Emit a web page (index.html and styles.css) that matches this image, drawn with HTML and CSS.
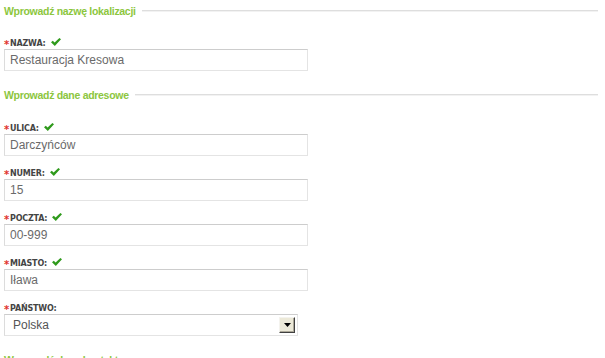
FILE: index.html
```html
<!DOCTYPE html>
<html lang="pl">
<head>
<meta charset="utf-8">
<link rel="stylesheet" href="styles.css">
</head>
<body>
<form class="form">
  <section class="group">
    <div class="legend"><span class="legend-text">Wprowadź nazwę lokalizacji</span><span class="legend-line"></span></div>
    <div class="field">
      <div class="label"><span class="req">*</span>NAZWA:<svg class="check" viewBox="0 0 10 8" width="10" height="8"><path d="M0 4.2 L1.8 2.8 L3.6 4.6 L8.4 0 L10 1.2 L3.8 8 Z" fill="#2f9a1c"/></svg></div>
      <div class="input">Restauracja Kresowa</div>
    </div>
  </section>
  <section class="group group-address">
    <div class="legend"><span class="legend-text">Wprowadź dane adresowe</span><span class="legend-line"></span></div>
    <div class="field">
      <div class="label"><span class="req">*</span>ULICA:<svg class="check" viewBox="0 0 10 8" width="10" height="8"><path d="M0 4.2 L1.8 2.8 L3.6 4.6 L8.4 0 L10 1.2 L3.8 8 Z" fill="#2f9a1c"/></svg></div>
      <div class="input">Darczyńców</div>
    </div>
    <div class="field">
      <div class="label"><span class="req">*</span>NUMER:<svg class="check" viewBox="0 0 10 8" width="10" height="8"><path d="M0 4.2 L1.8 2.8 L3.6 4.6 L8.4 0 L10 1.2 L3.8 8 Z" fill="#2f9a1c"/></svg></div>
      <div class="input">15</div>
    </div>
    <div class="field">
      <div class="label"><span class="req">*</span>POCZTA:<svg class="check" viewBox="0 0 10 8" width="10" height="8"><path d="M0 4.2 L1.8 2.8 L3.6 4.6 L8.4 0 L10 1.2 L3.8 8 Z" fill="#2f9a1c"/></svg></div>
      <div class="input">00-999</div>
    </div>
    <div class="field">
      <div class="label"><span class="req">*</span>MIASTO:<svg class="check" viewBox="0 0 10 8" width="10" height="8"><path d="M0 4.2 L1.8 2.8 L3.6 4.6 L8.4 0 L10 1.2 L3.8 8 Z" fill="#2f9a1c"/></svg></div>
      <div class="input">Iława</div>
    </div>
    <div class="field">
      <div class="label"><span class="req">*</span>PAŃSTWO:</div>
      <div class="select"><span class="select-text">Polska</span><span class="select-btn"><svg viewBox="0 0 7 4" width="7" height="4"><path d="M0 0 H7 L3.5 4 Z" fill="#000"/></svg></span></div>
    </div>
  </section>
  <section class="group">
    <div class="legend"><span class="legend-text">Wprowadź dane kontaktowe</span><span class="legend-line"></span></div>
  </section>
</form>
</body>
</html>
```
FILE: styles.css
```css
html, body { margin: 0; padding: 0; background: #fff; }
body { font-family: "Liberation Sans", Arial, sans-serif; overflow: hidden; height: 358px; }
.form { padding: 4px 7px 0 4px; display: flex; flex-direction: column; gap: 17px; }
.group { display: flex; flex-direction: column; gap: 11px; }
.legend { display: flex; align-items: center; gap: 6px; height: 14px; margin-bottom: 8px; }
.group-address .legend { margin-bottom: 9px; }
.legend-text { font-size: 10.5px; font-weight: bold; letter-spacing: -0.3px; color: #8cc63e; white-space: nowrap; }
.legend-line { flex: 1; height: 0; border-top: 1px solid #dedede; border-bottom: 1px solid #f2f2f2; }
.field { display: flex; flex-direction: column; }
.label { display: flex; align-items: center; height: 12px; font-family: "DejaVu Sans", Verdana, sans-serif; font-size: 8px; font-weight: bold; letter-spacing: -0.2px; color: #444; }
.req { color: #e0322d; font-size: 10px; margin-right: 1px; position: relative; top: 1px; }
.check { margin-left: 5px; margin-top: -3px; }
.input { width: 292px; height: 20px; line-height: 20px; padding: 0 5px; border: 1px solid #e4e4e4; border-top-color: #cdcdcd; border-left-color: #dcdcdc; font-size: 12px; color: #6a6a6a; }
.select { width: 282px; height: 20px; padding: 0 2px 0 8px; border: 1px solid #e4e4e4; border-top-color: #cdcdcd; border-left-color: #dcdcdc; display: flex; align-items: center; justify-content: space-between; font-size: 12px; color: #555; }
.select-btn { width: 14px; height: 14px; background: #ece9d8; border: 1px solid; border-color: #f4f3ee #404040 #404040 #f4f3ee; box-shadow: inset -1px -1px 0 #aca899; display: flex; align-items: center; justify-content: center; }
```
